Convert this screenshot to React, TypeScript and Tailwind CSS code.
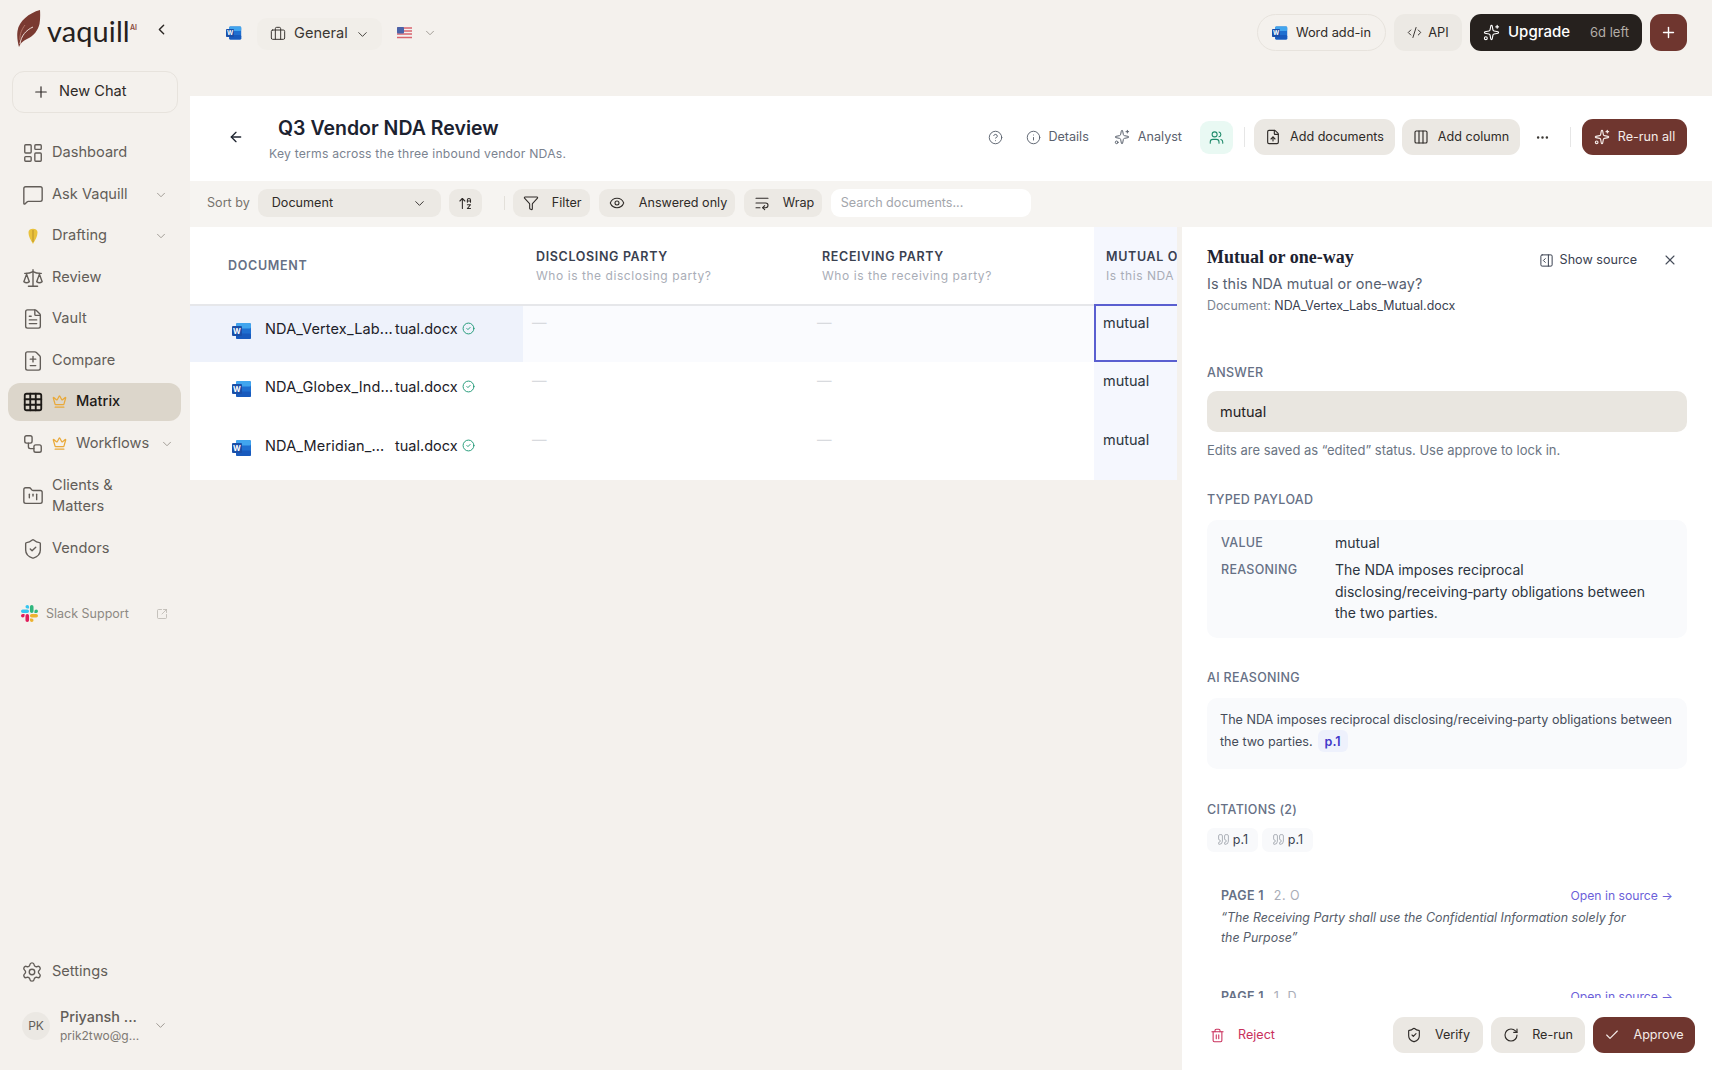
import {
  ArrowLeft, ArrowUpAZ, Briefcase, Check, ChevronDown, ChevronLeft, CircleCheck, CircleHelp, CodeXml,
  Columns3, Crown, Ellipsis, Eye, FileDiff, FileText, FileUp, FolderKanban, Funnel, Grid3x3, Info, LayoutDashboard,
  MessageSquare, PanelRightOpen, Plus, Quote, RotateCw, Scale, Settings, ShieldCheck, Sparkles, SquareArrowOutUpRight,
  Trash2, Users, Workflow, WrapText, X,
} from "lucide-react";
import type { ReactNode } from "react";

const WordIcon = ({ size = 20 }: { size?: number }) => (
  <svg width={size} height={size} viewBox="0 0 20 20" className="shrink-0">
    <rect x="4" y="2" width="15" height="16" rx="1.5" fill="#1f6fd0" />
    <rect x="4" y="2" width="15" height="5.5" rx="1.5" fill="#41a5ee" />
    <rect x="4" y="12.5" width="15" height="5.5" rx="1.5" fill="#185abd" />
    <rect x="0" y="5" width="10" height="10" rx="1" fill="#1a4fa8" />
    <text x="5" y="12.8" textAnchor="middle" fontSize="7.5" fontWeight="700" fill="#fff" fontFamily="Inter, sans-serif">W</text>
  </svg>
);

const Feather = () => (
  <svg width="24" height="38" viewBox="0 0 24 38" className="shrink-0">
    <path d="M23 0C12 3 2 11 0.5 21c-.8 6 .2 11 1.5 16 1.500-4 4-6 8-8 7-3 11-9 12.500-15 .8-5 .8-10 .5-14z" fill="#7a3a31" />
    <path d="M3 34c1-8 6-14 13-17" fill="none" stroke="#ecdcd6" strokeWidth="1" />
    <path d="M3 30c-.5-6 2-11 5-15" fill="none" stroke="#b27466" strokeWidth="1" />
  </svg>
);

const Nib = () => (
  <svg width="20" height="20" viewBox="0 0 20 20" className="shrink-0">
    <path d="M5.5 6C5.500 1.500 14.500 1.500 14.500 6c0 5-2.500 8-4.500 12-2-4-4.500-7-4.500-12z" fill="#e9c23c" />
    <path d="M10 4v12" stroke="#b8902a" strokeWidth="1" />
  </svg>
);

const Flag = () => (
  <svg width="15" height="12" viewBox="0 0 15 12" className="shrink-0">
    <rect width="15" height="12" rx="1.5" fill="#f3f0f0" />
    <path d="M0 1h15M0 4h15M0 7h15M0 10.500h15" stroke="#d9646d" strokeWidth="1.5" />
    <rect width="7" height="6.500" rx="1" fill="#4a62a8" />
  </svg>
);

const Slack = () => (
  <svg width="17" height="17" viewBox="0 0 24 24" className="shrink-0">
    <path fill="#E01E5A" d="M5.042 15.165a2.528 2.528 0 0 1-2.52 2.523A2.528 2.528 0 0 1 0 15.165a2.527 2.527 0 0 1 2.522-2.52h2.52v2.52zM6.313 15.165a2.527 2.527 0 0 1 2.521-2.52 2.527 2.527 0 0 1 2.521 2.52v6.313A2.528 2.528 0 0 1 8.834 24a2.528 2.528 0 0 1-2.521-2.522v-6.313z" />
    <path fill="#36C5F0" d="M8.834 5.042a2.528 2.528 0 0 1-2.521-2.52A2.528 2.528 0 0 1 8.834 0a2.528 2.528 0 0 1 2.521 2.522v2.52H8.834zM8.834 6.313a2.528 2.528 0 0 1 2.521 2.521 2.528 2.528 0 0 1-2.521 2.521H2.522A2.528 2.528 0 0 1 0 8.834a2.528 2.528 0 0 1 2.522-2.521h6.312z" />
    <path fill="#2EB67D" d="M18.956 8.834a2.528 2.528 0 0 1 2.522-2.521A2.528 2.528 0 0 1 24 8.834a2.528 2.528 0 0 1-2.522 2.521h-2.522V8.834zM17.688 8.834a2.528 2.528 0 0 1-2.523 2.521 2.527 2.527 0 0 1-2.52-2.521V2.522A2.527 2.527 0 0 1 15.165 0a2.528 2.528 0 0 1 2.523 2.522v6.312z" />
    <path fill="#ECB22E" d="M15.165 18.956a2.528 2.528 0 0 1 2.523 2.522A2.528 2.528 0 0 1 15.165 24a2.527 2.527 0 0 1-2.52-2.522v-2.522h2.52zM15.165 17.688a2.527 2.527 0 0 1-2.52-2.523 2.526 2.526 0 0 1 2.52-2.52h6.313A2.527 2.527 0 0 1 24 15.165a2.528 2.528 0 0 1-2.522 2.523h-6.313z" />
  </svg>
);

const NavItem = ({ icon, label, crown, chevron, active }: {
  icon: ReactNode; label: string; crown?: boolean; chevron?: string; active?: boolean;
}) => (
  <div className={`flex h-[38px] items-center rounded-[12px] pl-[14px] ${active ? "bg-[#dcd6cb] font-medium text-[#1d1a17]" : "text-[#625d58]"}`}>
    <span className="flex w-[22px] shrink-0 justify-center">{icon}</span>
    <span className={crown ? "ml-[8px] flex items-center gap-[9px]" : "ml-[8px]"}>
      {crown && <Crown size={15} className="text-[#e9a93a]" />}
      {label}
    </span>
    {chevron && <ChevronDown size={14} strokeWidth={1.5} className={`ml-auto ${chevron} text-[#97928c]`} />}
  </div>
);

const Sidebar = () => (
  <aside className="flex w-[190px] shrink-0 flex-col text-[14.6px]">
    <div className="flex h-[71px] shrink-0 items-start pl-[17px] pt-[10px]">
      <Feather />
      <span className="ml-[6px] mt-[4px] w-[82px] font-['Lato',sans-serif] text-[29px] leading-[34px] tracking-[0.1px] text-[#26211e]">vaquill</span>
      <span className="ml-[1px] mt-[13px] text-[7px] font-semibold leading-[10px] text-[#8a4a40]">AI</span>
      <ChevronLeft size={17} className="ml-[16px] mt-[11px] text-[#2b2724]" />
    </div>
    <div className="ml-[12px] mr-[12px] flex h-[42px] items-center rounded-[12px] border border-[#e7e3dd] pl-[19px] text-[#2f2b28]">
      <Plus size={18} strokeWidth={1.6} />
      <span className="ml-[9px]">New Chat</span>
    </div>
    <nav className="ml-[8px] mr-[9px] mt-[21px] flex flex-col gap-[3.5px]">
      <NavItem icon={<LayoutDashboard size={22} strokeWidth={1.5} />} label="Dashboard" />
      <NavItem icon={<MessageSquare size={22} strokeWidth={1.5} />} label="Ask Vaquill" chevron="mr-[13px]" />
      <NavItem icon={<Nib />} label="Drafting" chevron="mr-[13px]" />
      <NavItem icon={<Scale size={22} strokeWidth={1.5} />} label="Review" />
      <NavItem icon={<FileText size={22} strokeWidth={1.5} />} label="Vault" />
      <NavItem icon={<FileDiff size={22} strokeWidth={1.5} />} label="Compare" />
      <NavItem active icon={<Grid3x3 size={22} strokeWidth={2} />} label="Matrix" crown />
      <NavItem icon={<Workflow size={22} strokeWidth={1.5} />} label="Workflows" crown chevron="mr-[7px]" />
      <div className="flex h-[60px] items-center pl-[14px] leading-[21px] text-[#625d58]">
        <span className="flex w-[22px] shrink-0 justify-center"><FolderKanban size={22} strokeWidth={1.5} /></span>
        <span className="ml-[8px]">Clients &<br />Matters</span>
      </div>
      <NavItem icon={<ShieldCheck size={22} strokeWidth={1.5} />} label="Vendors" />
    </nav>
    <div className="mt-[37px] flex items-center pl-[21px] text-[12.5px] text-[#8d8983]">
      <Slack />
      <span className="ml-[8px]">Slack Support</span>
      <SquareArrowOutUpRight size={12} strokeWidth={1.5} className="ml-[27px] text-[#b5b1ab]" />
    </div>
    <div className="mt-auto flex h-[38px] items-center pl-[21px] text-[#625d58]">
      <Settings size={22} strokeWidth={1.5} />
      <span className="ml-[9px]">Settings</span>
    </div>
    <div className="mb-[26px] mt-[16px] flex h-[37px] items-center pl-[22px]">
      <span className="flex h-[28px] w-[28px] shrink-0 items-center justify-center rounded-full bg-[#ebe8e3] text-[12px] text-[#625d58]">PK</span>
      <div className="ml-[10px] w-[76px] whitespace-nowrap">
        <div className="text-[14.4px] font-medium leading-[20px] text-[#625d58]">Priyansh ...</div>
        <div className="text-[12px] leading-[17px] text-[#7d7872]">prik2two@g...</div>
      </div>
      <ChevronDown size={15} strokeWidth={1.5} className="ml-[17px] text-[#97928c]" />
    </div>
  </aside>
);

const TopBar = () => (
  <div className="flex h-[96px] shrink-0 items-start pr-[25px] pt-[14px] text-[14px]">
    <div className="ml-[36px] mt-[11px]"><WordIcon size={16} /></div>
    <div className="ml-[15px] mt-[4px] flex h-[32px] w-[125px] items-center rounded-[10px] bg-[#f1eee9] pl-[13px] text-[14.6px] text-[#3b3733]">
      <Briefcase size={16} strokeWidth={1.5} />
      <span className="ml-[8px]">General</span>
      <ChevronDown size={15} strokeWidth={1.5} className="ml-[7px]" />
    </div>
    <div className="ml-[15px] mt-[13px]"><Flag /></div>
    <ChevronDown size={14} strokeWidth={1.5} className="ml-[11px] mt-[12px] text-[#97928c]" />
    <div className="ml-auto flex h-[37px] w-[129px] items-center justify-center gap-[8px] rounded-full border border-[#e7e3dd] text-[12.8px] text-[#2f2b28]">
      <WordIcon size={16} />Word add-in
    </div>
    <div className="ml-[8px] flex h-[37px] w-[68px] items-center justify-center gap-[6px] rounded-[11px] bg-[#ece9e4] text-[12.8px] text-[#2f2b28]">
      <CodeXml size={15} strokeWidth={1.5} />API
    </div>
    <div className="ml-[8px] flex h-[37px] w-[172px] items-center rounded-[11px] bg-[#26211e] pl-[13px] text-white">
      <Sparkles size={17} strokeWidth={1.6} />
      <span className="ml-[8px] text-[15px] font-medium">Upgrade</span>
      <span className="ml-[20px] text-[13px] text-[#b3aea8]">6d left</span>
    </div>
    <div className="ml-[8px] flex h-[37px] w-[37px] items-center justify-center rounded-[11px] bg-[#6f362f] text-white">
      <Plus size={17} />
    </div>
  </div>
);

const Btn = ({ icon, label, className }: { icon: ReactNode; label: string; className: string }) => (
  <div className={`flex items-center justify-center rounded-[11px] text-[12.6px] ${className}`}>
    {icon}<span>{label}</span>
  </div>
);

const PageHeader = () => (
  <div className="flex h-[85px] shrink-0 bg-white pr-[25px]">
    <ArrowLeft size={16} className="ml-[38px] mt-[33px] text-[#1f2530]" />
    <div className="ml-[25px]">
      <h1 className="ml-[9px] mt-[19px] text-[19.5px] font-semibold leading-[26px] text-[#1c2230]">Q3 Vendor NDA Review</h1>
      <p className="mt-[4px] text-[12.2px] leading-[18px] tracking-[0.2px] text-[#7b8390]">Key terms across the three inbound vendor NDAs.</p>
    </div>
    <div className="ml-auto mt-[23px] flex h-[36px] items-center text-[12.6px] text-[#5a616d]">
      <CircleHelp size={15} strokeWidth={1.5} />
      <Info size={15} strokeWidth={1.5} className="ml-[23px]" />
      <span className="ml-[7px]">Details</span>
      <Sparkles size={16} strokeWidth={1.5} className="ml-[25px]" />
      <span className="ml-[8px]">Analyst</span>
      <div className="ml-[18px] flex h-[33px] w-[33px] items-center justify-center rounded-[9px] bg-[#e9f9f3] text-[#1f8a6a]">
        <Users size={15} strokeWidth={1.7} />
      </div>
      <div className="ml-[11px] h-[20px] w-px bg-[#e6e6e6]" />
      <Btn icon={<FileUp size={16} strokeWidth={1.7} />} label="Add documents" className="ml-[9px] h-[36px] w-[141px] gap-[9px] bg-[#ebe8e3] text-[#2f2b28]" />
      <Btn icon={<Columns3 size={16} strokeWidth={1.7} />} label="Add column" className="ml-[7px] h-[36px] w-[118px] gap-[9px] bg-[#ebe8e3] text-[#2f2b28]" />
      <Ellipsis size={15} className="ml-[15px] text-[#3b3733]" />
      <div className="ml-[20px] h-[20px] w-px bg-[#e6e6e6]" />
      <Btn icon={<Sparkles size={16} strokeWidth={1.7} />} label="Re-run all" className="ml-[11px] h-[36px] w-[105px] gap-[8px] bg-[#6f362f] text-[#f5ece9]" />
    </div>
  </div>
);

const Toolbar = () => (
  <div className="flex h-[46px] shrink-0 items-center bg-[#f6f4f1] pb-[2px] pl-[17px] text-[12.6px] text-[#2f2b28]">
    <span className="text-[#77736d]">Sort by</span>
    <div className="ml-[8px] flex h-[28px] w-[183px] items-center justify-between rounded-[9px] bg-[#ece9e4] px-[14px]">
      Document<ChevronDown size={15} strokeWidth={1.5} />
    </div>
    <div className="ml-[8px] flex h-[28px] w-[33px] items-center justify-center rounded-[9px] bg-[#ece9e4]"><ArrowUpAZ size={15} strokeWidth={1.7} /></div>
    <div className="ml-[22px] h-[14px] w-px bg-[#e3e0da]" />
    <div className="ml-[8px] flex h-[28px] w-[77px] items-center rounded-[9px] bg-[#ece9e4] pl-[10px]"><Funnel size={16} strokeWidth={1.6} /><span className="ml-[13px]">Filter</span></div>
    <div className="ml-[9px] flex h-[28px] w-[136px] items-center rounded-[9px] bg-[#ece9e4] pl-[10px]"><Eye size={16} strokeWidth={1.6} /><span className="ml-[14px]">Answered only</span></div>
    <div className="ml-[9px] flex h-[28px] w-[78px] items-center rounded-[9px] bg-[#ece9e4] pl-[10px]"><WrapText size={16} strokeWidth={1.6} /><span className="ml-[13px]">Wrap</span></div>
    <div className="ml-[9px] flex h-[28px] w-[200px] items-center rounded-[9px] bg-white pl-[10px] text-[#a3a6ac]">Search documents...</div>
  </div>
);

const docs = [
  { head: "NDA_Vertex_Lab...", cls: "pt-[13px] bg-[#eef2fb]", cell: "pt-[7px] bg-[#fafbfe]", sel: true },
  { head: "NDA_Globex_Ind...", cls: "pt-[15px]", cell: "pt-[9px]", sel: false },
  { head: "NDA_Meridian_...", cls: "pt-[15px]", cell: "pt-[9px]", sel: false },
];

const ColHead = ({ title, sub, className }: { title: string; sub: string; className: string }) => (
  <div className={`flex flex-col justify-center overflow-hidden whitespace-nowrap pt-[2px] ${className}`}>
    <div className="text-[12.5px] font-semibold leading-[18px] tracking-[0.65px] text-[#3a4150]">{title}</div>
    <div className="text-[12px] leading-[19px] tracking-[0.55px] text-[#a9adb7]">{sub}</div>
  </div>
);

const Table = () => (
  <div className="grid h-[253px] w-[987px] shrink-0 grid-cols-[333px_285px_286px_83px] grid-rows-[77px_2px_56px_59px_59px] overflow-hidden bg-white">
    <div className="flex items-center pl-[38px] pt-[2px] text-[12.5px] font-semibold tracking-[0.7px] text-[#667085]">DOCUMENT</div>
    <ColHead title="DISCLOSING PARTY" sub="Who is the disclosing party?" className="pl-[13px]" />
    <ColHead title="RECEIVING PARTY" sub="Who is the receiving party?" className="pl-[14px]" />
    <ColHead title="MUTUAL OR ONE-WAY" sub="Is this NDA mutual or one-way?" className="bg-[#f5f7fe] pl-[12px]" />
    <div className="col-span-3 bg-[#e6e7ea]" />
    <div className="bg-[#5a5fd0]" />
    {docs.map((d) => (
      <div key={d.head} className="contents">
        <div className={`flex items-start pl-[42px] text-[14.5px] leading-[20px] text-[#1c2028] ${d.cls}`}>
          <div className="mt-[2px]"><WordIcon /></div>
          <span className="ml-[13px] w-[130px] overflow-hidden whitespace-nowrap tracking-[0.15px]">{d.head}</span>
          <span>tual.docx</span>
          <CircleCheck size={13} strokeWidth={1.8} className="ml-[4px] mt-[3px] text-[#239a78]" />
        </div>
        <div className={`pl-[9px] text-[14.5px] leading-[20px] text-[#d8dade] ${d.cell}`}>—</div>
        <div className={`pl-[9px] text-[14.5px] leading-[20px] text-[#d8dade] ${d.cell}`}>—</div>
        {d.sel ? (
          <div className="border-b-2 border-l-2 border-[#5a5fd0] bg-[#f5f7fe] pl-[7px] pt-[7px] text-[14.5px] leading-[20px] text-[#2c3440]">mutual</div>
        ) : (
          <div className={`bg-[#f5f7fe] pl-[9px] text-[14.5px] leading-[20px] text-[#2c3440] ${d.cell}`}>mutual</div>
        )}
      </div>
    ))}
  </div>
);

const Label = ({ children, className = "" }: { children: ReactNode; className?: string }) => (
  <div className={`text-[12.5px] font-medium leading-[16px] tracking-[0.3px] text-[#667085] ${className}`}>{children}</div>
);

const Chip = () => (
  <span className="flex h-[24px] w-[51px] items-center justify-center gap-[3px] rounded-[7px] bg-[#f8f9fb] text-[12.5px] text-[#3b4350]">
    <Quote size={13} strokeWidth={1.5} className="text-[#9a9fa8]" />p.1
  </span>
);

const Citation = ({ no, quote, className = "" }: { no: string; quote?: string; className?: string }) => (
  <div className={`px-[14px] ${className}`}>
    <div className="flex h-[18px] items-center text-[12.5px] leading-[18px]">
      <span className="font-semibold tracking-[0.3px] text-[#667085]">PAGE 1</span>
      <span className="ml-[10px] tracking-[0.5px] text-[#a9adb7]">{no}</span>
      <span className="ml-auto text-[12.2px] text-[#6c5fd9]">Open in source →</span>
    </div>
    {quote && <p className="mt-[3px] w-[415px] text-[12.4px] italic leading-[20.5px] text-[#565d6a]">{quote}</p>}
  </div>
);

const DetailPanel = () => (
  <div className="ml-[5px] flex w-[530px] shrink-0 flex-col bg-white">
    <div className="h-0 flex-1 overflow-hidden px-[25px] pt-[18px]">
      <div className="flex items-start">
        <h2 className="font-['Liberation_Serif',serif] text-[18px] font-bold leading-[24px] text-[#1c2230]">Mutual or one-way</h2>
        <div className="ml-auto mt-[6px] flex items-center text-[12.6px] text-[#3a4150]">
          <PanelRightOpen size={15} strokeWidth={1.6} />
          <span className="ml-[6px]">Show source</span>
          <X size={16} strokeWidth={1.6} className="ml-[25px] mr-[9px] text-[#454c59]" />
        </div>
      </div>
      <p className="mt-[4px] text-[14.4px] leading-[20px] tracking-[0.1px] text-[#56606f]">Is this NDA mutual or one‑way?</p>
      <p className="mt-[3px] text-[12.4px] leading-[18px] text-[#7b8390]">Document: <span className="text-[#3a4150]">NDA_Vertex_Labs_Mutual.docx</span></p>

      <Label className="mt-[50px]">ANSWER</Label>
      <div className="mt-[10px] flex h-[41px] items-center rounded-[10px] bg-[#e9e6e0] pl-[13px] text-[14.5px] text-[#26211e]">mutual</div>
      <p className="mt-[9px] text-[13px] leading-[18px] text-[#6b7583]">Edits are saved as “edited” status. Use approve to lock in.</p>

      <Label className="mt-[33px]">TYPED PAYLOAD</Label>
      <div className="mt-[12px] grid h-[118px] grid-cols-[114px_330px] content-start rounded-[10px] bg-[#f9fafc] px-[14px] pt-[12px] text-[14px] leading-[21.5px] text-[#2c3440]">
        <span className="text-[12.5px] font-medium tracking-[0.3px] text-[#667085]">VALUE</span>
        <span>mutual</span>
        <span className="mt-[6px] text-[12.5px] font-medium tracking-[0.3px] text-[#667085]">REASONING</span>
        <span className="mt-[6px]">The NDA imposes reciprocal disclosing/receiving‑party obligations between the two parties.</span>
      </div>

      <Label className="mt-[32px]">AI REASONING</Label>
      <div className="mt-[12px] h-[71px] rounded-[10px] bg-[#f9fafc] px-[13px] pt-[11px] text-[12.6px] leading-[21.5px] text-[#454c59]">
        The NDA imposes reciprocal disclosing/receiving‑party obligations between the two parties.
        <span className="ml-[5px] inline-block h-[22px] rounded-[6px] bg-[#eef1fc] px-[7px] font-semibold leading-[24px] text-[#4338ca]">p.1</span>
      </div>

      <Label className="mt-[33px]">CITATIONS (2)</Label>
      <div className="mt-[10px] flex gap-[4px]"><Chip /><Chip /></div>
      <Citation className="mt-[35px]" no="2. O" quote="“The Receiving Party shall use the Confidential Information solely for the Purpose”" />
      <Citation className="mt-[39px]" no="1. D" />
    </div>
    <div className="flex h-[72px] shrink-0 items-start pl-[28px] pr-[17px] pt-[19px] text-[12.6px]">
      <div className="flex h-[36px] items-center text-[#c9305c]">
        <Trash2 size={15} strokeWidth={1.7} /><span className="ml-[13px]">Reject</span>
      </div>
      <Btn icon={<ShieldCheck size={16} strokeWidth={1.7} />} label="Verify" className="ml-auto h-[36px] w-[90px] gap-[13px] bg-[#ebe8e3] text-[#2f2b28]" />
      <Btn icon={<RotateCw size={16} strokeWidth={1.7} />} label="Re-run" className="ml-[8px] h-[36px] w-[94px] gap-[13px] bg-[#ebe8e3] text-[#2f2b28]" />
      <Btn icon={<Check size={16} strokeWidth={1.7} />} label="Approve" className="ml-[8px] h-[36px] w-[102px] gap-[13px] bg-[#6f362f] text-[#f5ece9]" />
    </div>
  </div>
);

export default function App() {
  return (
    <div className="flex h-[1070px] w-[1712px] overflow-hidden bg-[#f4f1ed] font-['Inter',sans-serif]">
      <Sidebar />
      <main className="flex min-w-0 flex-1 flex-col">
        <TopBar />
        <PageHeader />
        <Toolbar />
        <div className="flex min-h-0 flex-1">
          <Table />
          <DetailPanel />
        </div>
      </main>
    </div>
  );
}
